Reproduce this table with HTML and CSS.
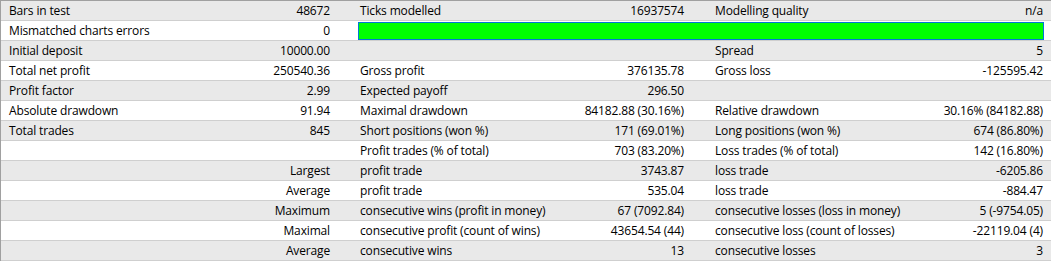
FILE: index.html
```html
<!DOCTYPE html>
<html>
<head>
<meta charset="utf-8">
<link rel="stylesheet" href="styles.css">
</head>
<body>
<div class="report">
  <div class="row alt">
    <div class="cell c1"><span>Bars in test</span><span>48672</span></div>
    <div class="cell c2"><span>Ticks modelled</span><span>16937574</span></div>
    <div class="cell c3"><span>Modelling quality</span><span>n/a</span></div>
  </div>
  <div class="row">
    <div class="cell c1"><span>Mismatched charts errors</span><span>0</span></div>
    <div class="barcell"><div class="bar"></div></div>
  </div>
  <div class="row alt">
    <div class="cell c1"><span>Initial deposit</span><span>10000.00</span></div>
    <div class="cell c2"></div>
    <div class="cell c3"><span>Spread</span><span>5</span></div>
  </div>
  <div class="row">
    <div class="cell c1"><span>Total net profit</span><span>250540.36</span></div>
    <div class="cell c2"><span>Gross profit</span><span>376135.78</span></div>
    <div class="cell c3"><span>Gross loss</span><span>-125595.42</span></div>
  </div>
  <div class="row alt">
    <div class="cell c1"><span>Profit factor</span><span>2.99</span></div>
    <div class="cell c2"><span>Expected payoff</span><span>296.50</span></div>
    <div class="cell c3"></div>
  </div>
  <div class="row">
    <div class="cell c1"><span>Absolute drawdown</span><span>91.94</span></div>
    <div class="cell c2"><span>Maximal drawdown</span><span>84182.88 (30.16%)</span></div>
    <div class="cell c3"><span>Relative drawdown</span><span>30.16% (84182.88)</span></div>
  </div>
  <div class="row alt">
    <div class="cell c1"><span>Total trades</span><span>845</span></div>
    <div class="cell c2"><span>Short positions (won %)</span><span>171 (69.01%)</span></div>
    <div class="cell c3"><span>Long positions (won %)</span><span>674 (86.80%)</span></div>
  </div>
  <div class="row">
    <div class="cell c1"></div>
    <div class="cell c2"><span>Profit trades (% of total)</span><span>703 (83.20%)</span></div>
    <div class="cell c3"><span>Loss trades (% of total)</span><span>142 (16.80%)</span></div>
  </div>
  <div class="row alt">
    <div class="cell c1"><span></span><span>Largest</span></div>
    <div class="cell c2"><span>profit trade</span><span>3743.87</span></div>
    <div class="cell c3"><span>loss trade</span><span>-6205.86</span></div>
  </div>
  <div class="row">
    <div class="cell c1"><span></span><span>Average</span></div>
    <div class="cell c2"><span>profit trade</span><span>535.04</span></div>
    <div class="cell c3"><span>loss trade</span><span>-884.47</span></div>
  </div>
  <div class="row alt">
    <div class="cell c1"><span></span><span>Maximum</span></div>
    <div class="cell c2"><span>consecutive wins (profit in money)</span><span>67 (7092.84)</span></div>
    <div class="cell c3"><span>consecutive losses (loss in money)</span><span>5 (-9754.05)</span></div>
  </div>
  <div class="row">
    <div class="cell c1"><span></span><span>Maximal</span></div>
    <div class="cell c2"><span>consecutive profit (count of wins)</span><span>43654.54 (44)</span></div>
    <div class="cell c3"><span>consecutive loss (count of losses)</span><span>-22119.04 (4)</span></div>
  </div>
  <div class="row alt">
    <div class="cell c1"><span></span><span>Average</span></div>
    <div class="cell c2"><span>consecutive wins</span><span>13</span></div>
    <div class="cell c3"><span>consecutive losses</span><span>3</span></div>
  </div>
</div>
</body>
</html>
```

FILE: styles.css
```css
html, body {
  margin: 0;
  padding: 0;
  background: #ffffff;
}
body {
  font-family: "Open Sans", "Noto Sans", sans-serif;
  font-size: 12px;
  letter-spacing: -0.15px;
  color: #000000;
  width: 1051px;
  height: 264px;
  overflow: hidden;
}
.report {
  border-top: 1px solid #a0a0a0;
  border-left: 1px solid #a0a0a0;
}
.row {
  display: grid;
  grid-template-columns: 349px 350px 1fr;
  height: 19px;
  border-bottom: 1px solid #cfcfcf;
  background: #ffffff;
}
.row.alt {
  background: #e9e9e9;
}
.cell {
  display: flex;
  justify-content: space-between;
  align-items: center;
  line-height: 19px;
  white-space: nowrap;
}
.c1 {
  padding: 0 20px 0 8px;
}
.c2 {
  padding: 0 16px 0 10px;
}
.c3 {
  padding: 0 8px 0 15px;
}
.barcell {
  grid-column: 2 / 4;
  padding: 1px 7px 0 8px;
}
.bar {
  height: 18px;
  box-sizing: border-box;
  background: #00ff00;
  border: 1px solid #0078d7;
}
```
